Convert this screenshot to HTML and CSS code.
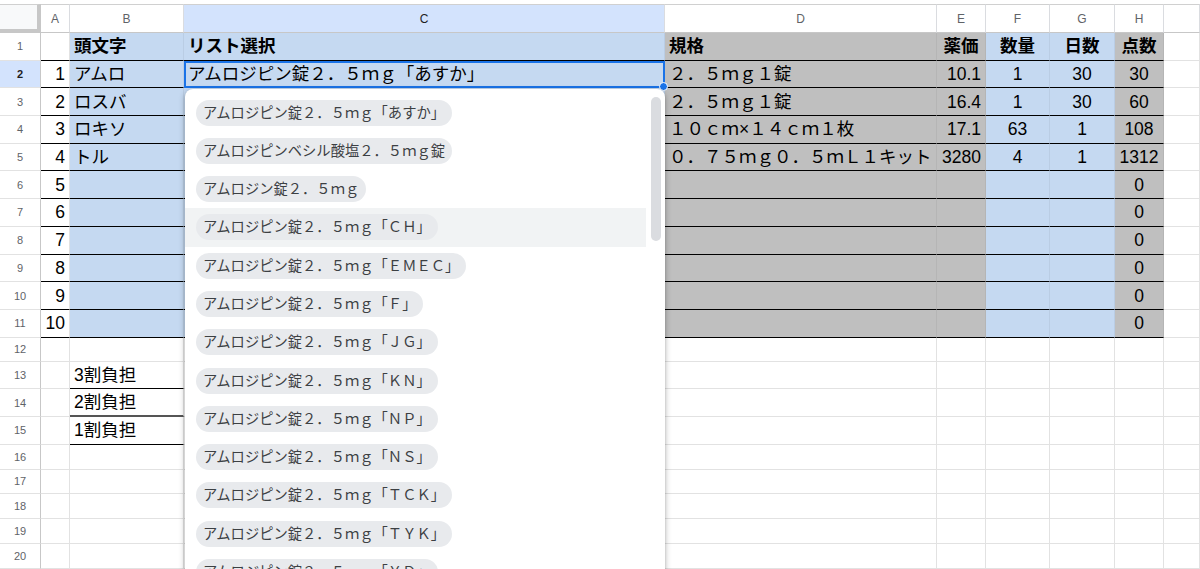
FILE: index.html
```html
<!DOCTYPE html>
<html lang="ja">
<head>
    <meta charset="UTF-8">
    <meta name="viewport" content="width=device-width, initial-scale=1.0">
    <title>処方リスト</title>
    <link rel="stylesheet" href="styles.css">
</head>
<body>
    <div class="sheet">
        <table class="grid">
            <colgroup>
                <col class="w-rh">
                <col class="w-a">
                <col class="w-b">
                <col class="w-c">
                <col class="w-d">
                <col class="w-e">
                <col class="w-f">
                <col class="w-g">
                <col class="w-h">
                <col>
            </colgroup>
            <thead>
                <tr class="colhead">
                    <th class="corner"></th>
                    <th>A</th>
                    <th>B</th>
                    <th class="sel">C</th>
                    <th>D</th>
                    <th>E</th>
                    <th>F</th>
                    <th>G</th>
                    <th>H</th>
                    <th></th>
                </tr>
            </thead>
            <tbody>
                <tr class="row ln">
                    <th>1</th>
                    <td></td>
                    <td class="blue b">頭文字</td>
                    <td class="blue b">リスト選択</td>
                    <td class="gray b">規格</td>
                    <td class="gray b c">薬価</td>
                    <td class="blue b c">数量</td>
                    <td class="blue b c">日数</td>
                    <td class="gray b c">点数</td>
                    <td class="out"></td>
                </tr>
                <tr class="row ln">
                    <th class="sel">2</th>
                    <td class="n">1</td>
                    <td class="blue">アムロ</td>
                    <td class="blue active">
                        アムロジピン錠２．５ｍｇ「あすか」
                        <span class="handle"></span>
                        <!-- プルダウン -->
                        <div class="dropdown">
                            <ul class="options">
                                <li><span class="chip">アムロジピン錠２．５ｍｇ「あすか」</span></li>
                                <li><span class="chip">アムロジピンベシル酸塩２．５ｍｇ錠</span></li>
                                <li><span class="chip">アムロジン錠２．５ｍｇ</span></li>
                                <li class="hover"><span class="chip">アムロジピン錠２．５ｍｇ「ＣＨ」</span></li>
                                <li><span class="chip">アムロジピン錠２．５ｍｇ「ＥＭＥＣ」</span></li>
                                <li><span class="chip">アムロジピン錠２．５ｍｇ「Ｆ」</span></li>
                                <li><span class="chip">アムロジピン錠２．５ｍｇ「ＪＧ」</span></li>
                                <li><span class="chip">アムロジピン錠２．５ｍｇ「ＫＮ」</span></li>
                                <li><span class="chip">アムロジピン錠２．５ｍｇ「ＮＰ」</span></li>
                                <li><span class="chip">アムロジピン錠２．５ｍｇ「ＮＳ」</span></li>
                                <li><span class="chip">アムロジピン錠２．５ｍｇ「ＴＣＫ」</span></li>
                                <li><span class="chip">アムロジピン錠２．５ｍｇ「ＴＹＫ」</span></li>
                                <li><span class="chip">アムロジピン錠２．５ｍｇ「ＹＤ」</span></li>
                            </ul>
                            <div class="thumb"></div>
                        </div>
                    </td>
                    <td class="gray">２．５ｍｇ１錠</td>
                    <td class="gray n">10.1</td>
                    <td class="blue c">1</td>
                    <td class="blue c">30</td>
                    <td class="gray c">30</td>
                    <td class="out"></td>
                </tr>
                <tr class="row ln">
                    <th>3</th>
                    <td class="n">2</td>
                    <td class="blue">ロスバ</td>
                    <td class="blue"></td>
                    <td class="gray">２．５ｍｇ１錠</td>
                    <td class="gray n">16.4</td>
                    <td class="blue c">1</td>
                    <td class="blue c">30</td>
                    <td class="gray c">60</td>
                    <td class="out"></td>
                </tr>
                <tr class="row ln">
                    <th>4</th>
                    <td class="n">3</td>
                    <td class="blue">ロキソ</td>
                    <td class="blue"></td>
                    <td class="gray">１０ｃｍ×１４ｃｍ１枚</td>
                    <td class="gray n">17.1</td>
                    <td class="blue c">63</td>
                    <td class="blue c">1</td>
                    <td class="gray c">108</td>
                    <td class="out"></td>
                </tr>
                <tr class="row ln">
                    <th>5</th>
                    <td class="n">4</td>
                    <td class="blue">トル</td>
                    <td class="blue"></td>
                    <td class="gray">０．７５ｍｇ０．５ｍＬ１キット</td>
                    <td class="gray n">3280</td>
                    <td class="blue c">4</td>
                    <td class="blue c">1</td>
                    <td class="gray c">1312</td>
                    <td class="out"></td>
                </tr>
                <tr class="row ln">
                    <th>6</th>
                    <td class="n">5</td>
                    <td class="blue"></td>
                    <td class="blue"></td>
                    <td class="gray"></td>
                    <td class="gray"></td>
                    <td class="blue"></td>
                    <td class="blue"></td>
                    <td class="gray c">0</td>
                    <td class="out"></td>
                </tr>
                <tr class="row ln">
                    <th>7</th>
                    <td class="n">6</td>
                    <td class="blue"></td>
                    <td class="blue"></td>
                    <td class="gray"></td>
                    <td class="gray"></td>
                    <td class="blue"></td>
                    <td class="blue"></td>
                    <td class="gray c">0</td>
                    <td class="out"></td>
                </tr>
                <tr class="row ln">
                    <th>8</th>
                    <td class="n">7</td>
                    <td class="blue"></td>
                    <td class="blue"></td>
                    <td class="gray"></td>
                    <td class="gray"></td>
                    <td class="blue"></td>
                    <td class="blue"></td>
                    <td class="gray c">0</td>
                    <td class="out"></td>
                </tr>
                <tr class="row ln">
                    <th>9</th>
                    <td class="n">8</td>
                    <td class="blue"></td>
                    <td class="blue"></td>
                    <td class="gray"></td>
                    <td class="gray"></td>
                    <td class="blue"></td>
                    <td class="blue"></td>
                    <td class="gray c">0</td>
                    <td class="out"></td>
                </tr>
                <tr class="row ln">
                    <th>10</th>
                    <td class="n">9</td>
                    <td class="blue"></td>
                    <td class="blue"></td>
                    <td class="gray"></td>
                    <td class="gray"></td>
                    <td class="blue"></td>
                    <td class="blue"></td>
                    <td class="gray c">0</td>
                    <td class="out"></td>
                </tr>
                <tr class="row ln">
                    <th>11</th>
                    <td class="n">10</td>
                    <td class="blue"></td>
                    <td class="blue"></td>
                    <td class="gray"></td>
                    <td class="gray"></td>
                    <td class="blue"></td>
                    <td class="blue"></td>
                    <td class="gray c">0</td>
                    <td class="out"></td>
                </tr>
                <tr class="row short">
                    <th>12</th>
                    <td></td><td></td><td></td><td></td><td></td><td></td><td></td><td></td><td></td>
                </tr>
                <tr class="row r13">
                    <th>13</th>
                    <td></td>
                    <td class="line">3割負担</td>
                    <td></td><td></td><td></td><td></td><td></td><td></td><td></td>
                </tr>
                <tr class="row">
                    <th>14</th>
                    <td></td>
                    <td class="line thick">2割負担</td>
                    <td></td><td></td><td></td><td></td><td></td><td></td><td></td>
                </tr>
                <tr class="row">
                    <th>15</th>
                    <td></td>
                    <td class="line">1割負担</td>
                    <td></td><td></td><td></td><td></td><td></td><td></td><td></td>
                </tr>
                <tr class="row short">
                    <th>16</th>
                    <td></td><td></td><td></td><td></td><td></td><td></td><td></td><td></td><td></td>
                </tr>
                <tr class="row short">
                    <th>17</th>
                    <td></td><td></td><td></td><td></td><td></td><td></td><td></td><td></td><td></td>
                </tr>
                <tr class="row short">
                    <th>18</th>
                    <td></td><td></td><td></td><td></td><td></td><td></td><td></td><td></td><td></td>
                </tr>
                <tr class="row short">
                    <th>19</th>
                    <td></td><td></td><td></td><td></td><td></td><td></td><td></td><td></td><td></td>
                </tr>
                <tr class="row short">
                    <th>20</th>
                    <td></td><td></td><td></td><td></td><td></td><td></td><td></td><td></td><td></td>
                </tr>
            </tbody>
        </table>
    </div>
</body>
</html>
```

FILE: styles.css
```css
html, body {
    margin: 0;
    height: 100%;
    overflow: hidden;
    background: #fff;
}
body {
    font-family: "Liberation Sans", "Noto Sans CJK JP", sans-serif;
    color: #000;
}
.sheet {
    padding-top: 4px;
}
.grid {
    table-layout: fixed;
    width: 100%;
    border-collapse: separate;
    border-spacing: 0;
}
.w-rh { width: 41px; }
.w-a { width: 29px; }
.w-b { width: 114px; }
.w-c { width: 481px; }
.w-d { width: 272px; }
.w-e { width: 49px; }
.w-f { width: 64px; }
.w-g { width: 65px; }
.w-h { width: 49px; }

/* 列見出し */
.colhead th {
    height: 29px;
    box-sizing: border-box;
    font-weight: normal;
    font-size: 12px;
    color: #5f6368;
    background: #fff;
    border-top: 1px solid #d0d0d0;
    border-right: 1px solid #dadce0;
    border-bottom: 1px solid #c7c7c7;
    padding: 0;
    text-align: center;
}
.colhead th.sel {
    background: #d3e3fd;
    color: #1f1f1f;
}
.colhead th.corner {
    background: #f8f9fa;
    border-right: 4px solid #c7c7c7;
    border-bottom: 4px solid #c7c7c7;
}

/* 行 */
.row {
    height: 27.7px;
}
.row.short {
    height: 24.8px;
}
.row.r13 {
    height: 27px;
}
.row th {
    font-weight: normal;
    font-size: 11px;
    color: #5f6368;
    background: #fff;
    border-right: 1px solid #c7c7c7;
    border-bottom: 1px solid #e2e2e2;
    padding: 0;
    text-align: center;
}
.row th.sel {
    background: #d3e3fd;
    color: #1f1f1f;
    font-weight: bold;
}
.row td {
    font-size: 17.5px;
    line-height: 22px;
    padding: 0 4px;
    border-right: 1px solid #e2e2e2;
    border-bottom: 1px solid #e2e2e2;
    white-space: nowrap;
    overflow: hidden;
    vertical-align: middle;
}
.row.ln td {
    border-bottom-color: #000;
}
.row.ln td.out {
    border-bottom-color: #e2e2e2;
}
.blue {
    background: #c5d9f1;
}
.gray {
    background: #bfbfbf;
}
.row td.blue,
.row td.gray {
    border-right-color: rgba(0, 0, 0, 0.05);
}
.b {
    font-weight: bold;
}
.c {
    text-align: center;
}
.n {
    text-align: right;
}
.row td.line {
    border-bottom: 1px solid #000;
}
.row td.line.thick {
    border-bottom: 2px solid #555;
}

/* 選択中のセル */
.row td.active {
    position: relative;
    overflow: visible;
    outline: 2px solid #1a73e8;
    outline-offset: -2px;
}
.handle {
    position: absolute;
    right: -4px;
    bottom: -4px;
    width: 7px;
    height: 7px;
    border-radius: 50%;
    background: #1a73e8;
    border: 1px solid #fff;
}

/* プルダウン */
.dropdown {
    position: absolute;
    z-index: 10;
    left: 1px;
    top: calc(100% + 2px);
    width: 480px;
    height: 490px;
    background: #fff;
    border-radius: 8px 8px 0 0;
    box-shadow: 0 2px 6px rgba(0, 0, 0, 0.3), 0 1px 2px rgba(0, 0, 0, 0.15);
    overflow: hidden;
}
.options {
    list-style: none;
    margin: 0;
    padding: 4px 19px 0 0;
}
.options li {
    height: 38.3px;
    display: flex;
    align-items: center;
    padding-left: 11px;
}
.options li.hover {
    background: #f1f3f4;
}
.chip {
    display: inline-block;
    height: 26px;
    line-height: 26px;
    padding: 0 7px;
    border-radius: 13px;
    background: #e8eaed;
    color: #3c4043;
    font-size: 14.3px;
}
.thumb {
    position: absolute;
    right: 4px;
    top: 8px;
    width: 10px;
    height: 144px;
    border-radius: 5px;
    background: #dadce0;
}
```
